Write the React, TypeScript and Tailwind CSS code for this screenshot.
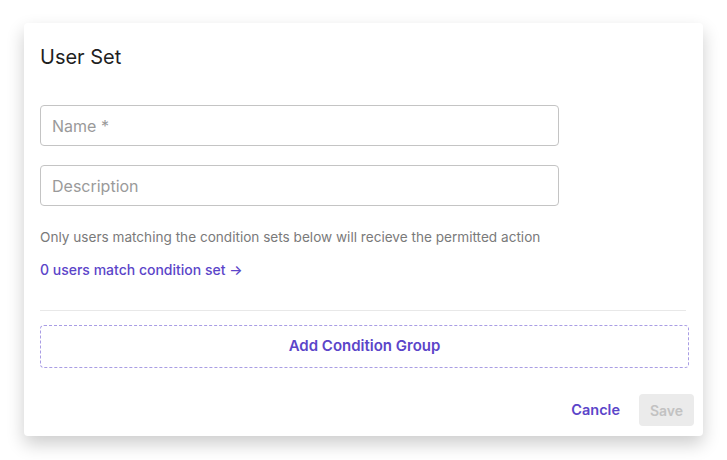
import React from 'react';

export default function App() {
  return (
    <div className="w-[727px] h-[460px] bg-white font-['Inter',sans-serif] pt-[23px] pl-[24px]">
      <div className="w-[679px] h-[413px] bg-white rounded-[4px] shadow-[0_8px_18px_rgba(0,0,0,0.2)] pt-[20px] pl-4 pr-[9px] flex flex-col">
        <h2 className="text-[20px] leading-[28px] text-[#1f1f1f] font-normal">User Set</h2>

        <div className="mt-[34px] w-[519px] h-[41px] border border-[#c4c4c4] rounded-[4px] flex items-center px-[11px] text-[16px] text-[#9a9a9a]">
          Name *
        </div>
        <div className="mt-[19px] w-[519px] h-[41px] border border-[#c4c4c4] rounded-[4px] flex items-center px-[11px] text-[16px] text-[#9a9a9a]">
          Description
        </div>

        <p className="mt-[21px] text-[13.6px] leading-[20px] text-[#7a7a7a]">
          Only users matching the condition sets below will recieve the permitted action
        </p>
        <p className="mt-[13px] text-[14px] leading-[20px] text-[#5b45c9] font-medium">
          0 users match condition set →
        </p>

        <div className="mt-[30px] w-[646px] h-px bg-[#e8e8e8]" />

        <div className="mt-[14px] w-[649px] h-[43px] border border-dashed border-[#a99de4] rounded-[4px] flex items-center justify-center text-[15px] font-semibold text-[#5b45c9]">
          Add Condition Group
        </div>

        <div className="mt-[26px] flex justify-end items-center">
          <span className="text-[14.5px] font-semibold text-[#5b45c9] mr-[19px]">Cancle</span>
          <div className="w-[55px] h-[32px] bg-[#ebebeb] rounded-[4px] flex items-center justify-center text-[14px] font-semibold text-[#c2c2c2]">
            Save
          </div>
        </div>
      </div>
    </div>
  );
}
